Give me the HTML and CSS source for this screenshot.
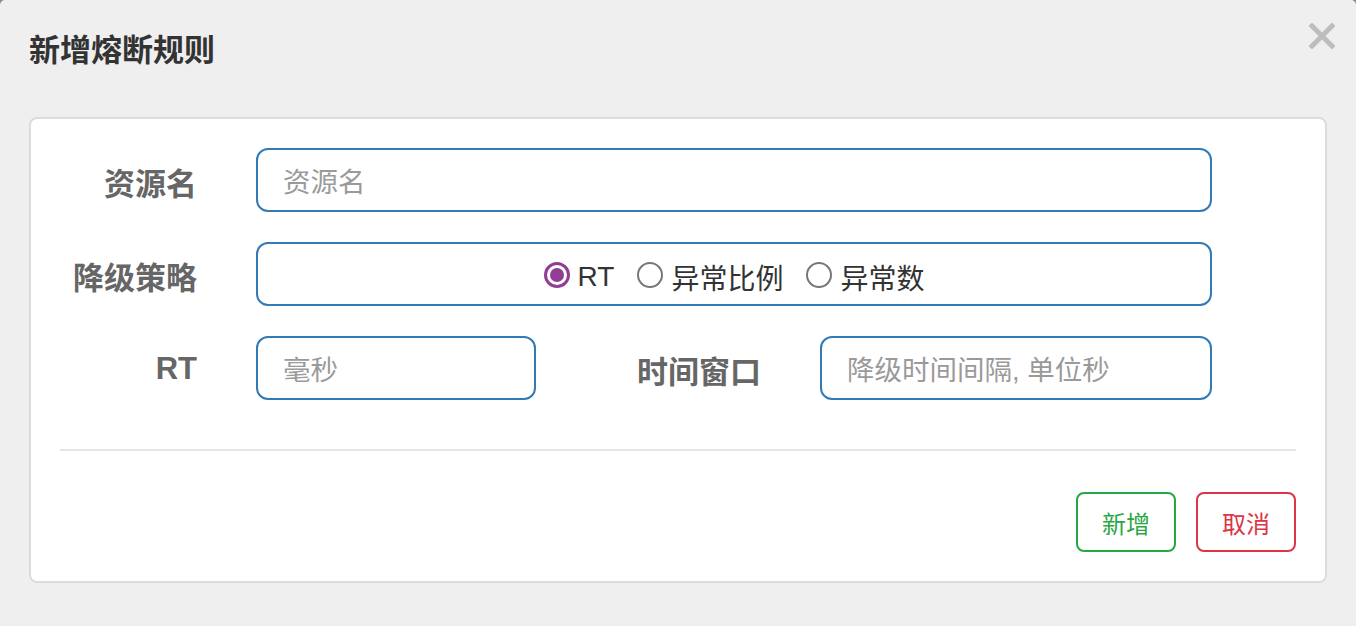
FILE: index.html
```html
<!DOCTYPE html>
<html lang="zh">
<head>
<meta charset="utf-8">
<title>新增熔断规则</title>
<link rel="stylesheet" href="styles.css">
</head>
<body>
<div class="dialog">
  <div class="dialog-header">
    <h1 class="dialog-title">新增熔断规则</h1>
    <span class="close">
      <svg width="26" height="26" viewBox="0 0 26 26"><path d="M3 3 L23 23 M23 3 L3 23" stroke="#bdbdbd" stroke-width="5" stroke-linecap="square"/></svg>
    </span>
  </div>
  <div class="card">
    <div class="form-row">
      <label class="form-label">资源名</label>
      <div class="input input-wide"><span class="placeholder">资源名</span></div>
    </div>
    <div class="form-row">
      <label class="form-label">降级策略</label>
      <div class="input input-wide radio-box">
        <span class="radio-item"><span class="radio checked"></span><span class="radio-text">RT</span></span>
        <span class="radio-item"><span class="radio"></span><span class="radio-text">异常比例</span></span>
        <span class="radio-item"><span class="radio"></span><span class="radio-text">异常数</span></span>
      </div>
    </div>
    <div class="form-row">
      <label class="form-label">RT</label>
      <div class="input input-short"><span class="placeholder">毫秒</span></div>
      <label class="form-label form-label-mid">时间窗口</label>
      <div class="input input-mid"><span class="placeholder">降级时间间隔, 单位秒</span></div>
    </div>
    <div class="divider"></div>
    <div class="actions">
      <button class="btn btn-success">新增</button>
      <button class="btn btn-danger">取消</button>
    </div>
  </div>
</div>
</body>
</html>
```

FILE: styles.css
```css
html {
  background: #8a8a8a;
}
body {
  margin: 0;
  font-family: "Liberation Sans", "Noto Sans CJK SC", sans-serif;
}
.dialog {
  width: 1356px;
  height: 626px;
  background: #efefef;
  border-radius: 5px 5px 0 0;
  box-sizing: border-box;
  padding: 0 29px;
}
.dialog-header {
  height: 117px;
  display: flex;
  align-items: flex-start;
  justify-content: space-between;
}
.dialog-title {
  margin: 0;
  padding-top: 31px;
  font-size: 31px;
  line-height: 40px;
  font-weight: bold;
  color: #333;
}
.close {
  margin-top: 23px;
  margin-right: -8px;
  width: 26px;
  height: 26px;
  display: block;
}
.close svg {
  display: block;
}
.card {
  background: #fff;
  border: 2px solid #dcdcdc;
  border-radius: 8px;
  padding: 29px;
  height: 466px;
  box-sizing: border-box;
}
.form-row {
  display: flex;
  align-items: center;
  height: 64px;
  margin-bottom: 30px;
}
.form-row:nth-child(3) {
  margin-bottom: 0;
}
.form-label {
  width: 137px;
  flex: none;
  text-align: right;
  font-size: 31px;
  font-weight: bold;
  color: #666;
  margin-right: 59px;
  padding-top: 2px;
}
.form-label-mid {
  width: 225px;
  margin-right: 59px;
}
.input {
  height: 64px;
  box-sizing: border-box;
  border: 2px solid #337ab7;
  border-radius: 12px;
  display: flex;
  align-items: center;
  padding: 0 25px;
  flex: none;
}
.input-wide {
  width: 956px;
}
.input-short {
  width: 280px;
}
.input-mid {
  width: 392px;
}
.placeholder {
  font-size: 27.5px;
  color: #9a9a9a;
}
.radio-box {
  justify-content: center;
  padding-top: 6px;
}
.radio-item {
  display: flex;
  align-items: center;
  margin: 0 11.5px;
}
.radio {
  width: 26px;
  height: 26px;
  box-sizing: border-box;
  border: 2px solid #777;
  border-radius: 50%;
  margin-right: 8px;
  position: relative;
  margin-top: -4px;
}
.radio.checked {
  border: 3px solid #913d96;
}
.radio.checked::after {
  content: "";
  position: absolute;
  left: 3px;
  top: 3px;
  width: 14px;
  height: 14px;
  border-radius: 50%;
  background: #913d96;
}
.radio-text {
  font-size: 28px;
  color: #333;
}
.divider {
  margin-top: 49px;
  height: 2px;
  background: #e5e5e5;
}
.actions {
  display: flex;
  justify-content: flex-end;
  gap: 20px;
  margin-top: 41px;
}
.btn {
  width: 100px;
  height: 60px;
  background: #fff;
  border: 2px solid;
  border-radius: 8px;
  font-family: "Liberation Sans", "Noto Sans CJK SC", sans-serif;
  font-size: 24px;
  padding: 0;
  cursor: pointer;
}
.btn-success {
  color: #28a745;
  border-color: #28a745;
}
.btn-danger {
  color: #dc3545;
  border-color: #dc3545;
}
```
